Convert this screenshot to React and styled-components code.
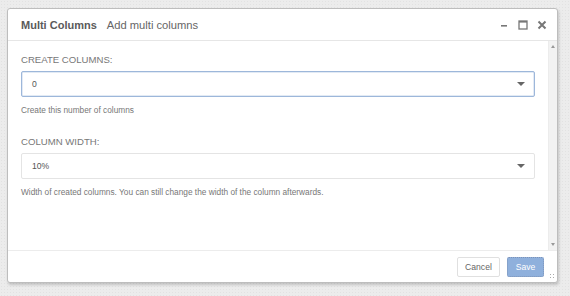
import React from 'react';
import styled, { createGlobalStyle } from 'styled-components';

const Global = createGlobalStyle`
  html, body {
    margin: 0;
    padding: 0;
    background: #ebebeb;
    font-family: "Liberation Sans", Arial, sans-serif;
  }
`;

const Page = styled.div`
  width: 570px;
  height: 296px;
  padding: 8px 12px 0 7px;
  box-sizing: border-box;
  background-color: #ececec;
  background-image: radial-gradient(#e2e2e2 0.6px, transparent 0.8px);
  background-size: 3px 3px;
`;

const Dialog = styled.div`
  width: 551px;
  height: 275px;
  box-sizing: border-box;
  background: #fff;
  border: 1px solid #bdbdbd;
  border-radius: 3px;
  box-shadow: 1px 2px 3px rgba(0, 0, 0, 0.18);
  display: flex;
  flex-direction: column;
  position: relative;
`;

const Header = styled.div`
  height: 31px;
  flex: none;
  display: flex;
  align-items: center;
  padding: 0 10px 0 13px;
  border-bottom: 1px solid #e6e6e6;
`;

const Title = styled.span`
  font-size: 11px;
  font-weight: bold;
  color: #5a5a5a;
  margin-right: 10px;
`;

const Subtitle = styled.span`
  font-size: 11.2px;
  color: #666;
  flex: 1;
`;

const Controls = styled.div`
  display: flex;
  align-items: center;
  gap: 9px;
`;

const IconButton = styled.div`
  width: 10px;
  height: 10px;
  display: flex;
  align-items: center;
  justify-content: center;
`;

const Body = styled.div`
  flex: 1;
  display: flex;
  min-height: 0;
`;

const Content = styled.div`
  flex: 1;
  padding: 12px 13px 0 13px;
`;

const Field = styled.div`
  margin-bottom: 18px;
`;

const Label = styled.div`
  font-size: 9.6px;
  line-height: 14px;
  color: #777;
  text-transform: uppercase;
  margin-bottom: 4px;
`;

const Select = styled.div`
  height: 26px;
  box-sizing: border-box;
  border: 1px solid ${({ $focused }) => ($focused ? '#9db7da' : '#e4e4e4')};
  box-shadow: ${({ $focused }) => ($focused ? 'inset 0 0 0 0.5px #c6d5ea' : 'none')};
  border-radius: 2px;
  display: flex;
  align-items: center;
  justify-content: space-between;
  padding: 0 9px 0 10px;
  font-size: 8.6px;
  color: #555;
`;

const Caret = styled.span`
  width: 0;
  height: 0;
  border-left: 4px solid transparent;
  border-right: 4px solid transparent;
  border-top: 4px solid #666;
`;

const Help = styled.div`
  font-size: 8.3px;
  line-height: 13px;
  color: #777;
  margin-top: 7px;
`;

const Scrollbar = styled.div`
  width: 9px;
  flex: none;
  background: #f2f2f2;
  border-left: 1px solid #ececec;
  display: flex;
  flex-direction: column;
  justify-content: space-between;
  align-items: center;
  padding: 4px 0;
  box-sizing: border-box;
`;

const Arrow = styled.span`
  width: 0;
  height: 0;
  border-left: 2.5px solid transparent;
  border-right: 2.5px solid transparent;
  ${({ $up }) => ($up ? 'border-bottom: 3px solid #999;' : 'border-top: 3px solid #999;')}
`;

const Footer = styled.div`
  height: 32px;
  flex: none;
  border-top: 1px solid #ececec;
  display: flex;
  align-items: center;
  justify-content: flex-end;
  gap: 7px;
  padding: 0 13px 0 0;
  box-sizing: border-box;
`;

const Button = styled.div`
  width: ${({ $primary }) => ($primary ? '37px' : '43px')};
  height: 20px;
  box-sizing: border-box;
  display: flex;
  align-items: center;
  justify-content: center;
  font-size: 8.6px;
  border-radius: 2px;
  color: ${({ $primary }) => ($primary ? '#fff' : '#666')};
  background: ${({ $primary }) => ($primary ? '#8fb0dc' : '#fff')};
  border: 1px ${({ $primary }) => ($primary ? 'dotted #7d93b8' : 'solid #e0e0e0')};
`;

const Grip = styled.div`
  position: absolute;
  right: 2px;
  bottom: 3px;
  width: 6px;
  height: 6px;
  background-image: radial-gradient(#aaa 0.7px, transparent 0.9px);
  background-size: 3px 3px;
`;

const fields = [
  { label: 'Create columns:', value: '0', help: 'Create this number of columns', focused: true },
  {
    label: 'Column width:',
    value: '10%',
    help: 'Width of created columns. You can still change the width of the column afterwards.',
  },
];

export default function App() {
  return (
    <>
      <Global />
      <Page>
        <Dialog>
          <Header>
            <Title>Multi Columns</Title>
            <Subtitle>Add multi columns</Subtitle>
            <Controls>
              <IconButton>
                <svg width="8" height="8" viewBox="0 0 8 8">
                  <rect x="1" y="4" width="6" height="1.6" fill="#777" />
                </svg>
              </IconButton>
              <IconButton>
                <svg width="10" height="10" viewBox="0 0 10 10">
                  <rect x="1" y="1" width="8" height="8" fill="none" stroke="#777" strokeWidth="1.3" />
                  <rect x="1" y="1" width="8" height="1.6" fill="#777" />
                </svg>
              </IconButton>
              <IconButton>
                <svg width="10" height="10" viewBox="0 0 10 10">
                  <path d="M1.5 1.5 L8.5 8.5 M8.5 1.5 L1.5 8.5" stroke="#777" strokeWidth="2" />
                </svg>
              </IconButton>
            </Controls>
          </Header>
          <Body>
            <Content>
              {fields.map((f) => (
                <Field key={f.label}>
                  <Label>{f.label}</Label>
                  <Select $focused={f.focused}>
                    <span>{f.value}</span>
                    <Caret />
                  </Select>
                  <Help>{f.help}</Help>
                </Field>
              ))}
            </Content>
            <Scrollbar>
              <Arrow $up />
              <Arrow />
            </Scrollbar>
          </Body>
          <Footer>
            <Button>Cancel</Button>
            <Button $primary>Save</Button>
          </Footer>
          <Grip />
        </Dialog>
      </Page>
    </>
  );
}
